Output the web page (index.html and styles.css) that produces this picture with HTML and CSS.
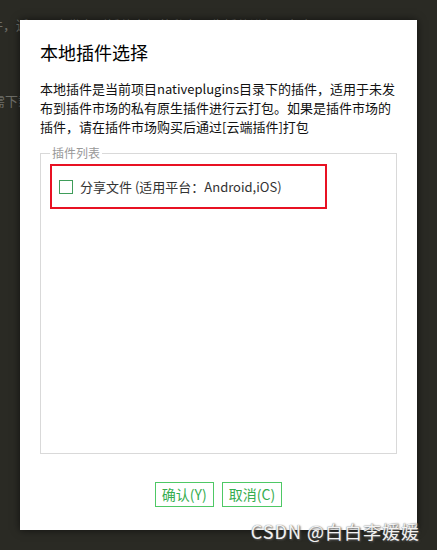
FILE: index.html
```html
<!DOCTYPE html>
<html lang="zh-CN">
<head>
  <meta charset="UTF-8" />
  <title>本地插件选择</title>
  <link rel="stylesheet" href="styles.css">
</head>
<body>
  <div class="page-behind">
    <p class="behind-line first">件，适用于未发布到插件市场的私有原生插件进行云打包。</p>
    <p class="behind-line second">需下载</p>
  </div>

  <div class="dialog">
    <h2 class="dialog-title">本地插件选择</h2>
    <p class="dialog-desc">本地插件是当前项目nativeplugins目录下的插件，适用于未发<br>布到插件市场的私有原生插件进行云打包。如果是插件市场的<br>插件，请在插件市场购买后通过[云端插件]打包</p>

    <fieldset class="plugin-list">
      <legend>插件列表</legend>
      <div class="plugin-item">
        <label class="plugin-label">
          <input type="checkbox" class="plugin-check" />
          <span>分享文件 (适用平台：Android,iOS)</span>
        </label>
      </div>
    </fieldset>

    <div class="dialog-buttons">
      <button type="button" class="dlg-button">确认(Y)</button>
      <button type="button" class="dlg-button">取消(C)</button>
    </div>
  </div>

  <div class="watermark">CSDN @白白李媛媛</div>
</body>
</html>
```

FILE: styles.css
```css
body {
  margin: 0;
  width: 437px;
  height: 550px;
  overflow: hidden;
  background: #2a2a24;
  font-family: "Noto Sans CJK SC", "Noto Sans", sans-serif;
  position: relative;
}
.page-behind {
  color: #6e6e68;
  font-size: 13px;
}
.behind-line {
  margin: 0;
  white-space: nowrap;
  line-height: 19px;
}
.behind-line.first {
  padding-top: 15px;
  margin-left: -10px;
}
.behind-line.second {
  margin-top: 57px;
  margin-left: -8px;
}
.dialog {
  position: absolute;
  left: 20px;
  top: 20px;
  width: 397px;
  height: 510px;
  box-sizing: border-box;
  background: #fff;
  box-shadow: 0 0 8px rgba(0,0,0,0.6);
  padding: 20px 20px 23px 20px;
  display: flex;
  flex-direction: column;
}
.dialog-title {
  margin: 0;
  font-size: 18px;
  font-weight: normal;
  line-height: 24px;
  color: #000;
}
.dialog-desc {
  margin: 15px 0 0 0;
  font-size: 13px;
  line-height: 19px;
  color: #111;
  white-space: nowrap;
}
.plugin-list {
  margin: 9px 0 0 0;
  padding: 0 9px;
  border: 1px solid #d9d9d9;
  flex: 1;
  min-height: 0;
}
.plugin-list legend {
  font-size: 12px;
  line-height: 16px;
  color: #999;
  padding: 0 2px;
}
.plugin-item {
  margin-top: 3px;
  width: 277px;
  height: 45px;
  box-sizing: border-box;
  border: 2px solid #e81123;
  padding-left: 7px;
  display: flex;
  align-items: center;
}
.plugin-label {
  display: flex;
  align-items: center;
  font-size: 13px;
  color: #333;
}
.plugin-check {
  appearance: none;
  margin: 0 7px 0 0;
  width: 14px;
  height: 14px;
  border: 1.5px solid #3f9d5a;
  box-sizing: border-box;
  background: #fff;
}
.dialog-buttons {
  margin-top: 28px;
  display: flex;
  justify-content: center;
  gap: 8px;
}
.dlg-button {
  height: 25px;
  padding: 0 6px;
  background: #fff;
  border: 1px solid #4ec865;
  color: #36ad4e;
  font-family: "Noto Sans CJK SC", "Noto Sans", sans-serif;
  font-size: 14px;
  line-height: 23px;
  border-radius: 0;
}
.watermark {
  position: absolute;
  right: 17px;
  bottom: 8px;
  font-family: "Noto Sans CJK SC", "Liberation Sans", sans-serif;
  font-size: 18px;
  line-height: 22px;
  letter-spacing: 1px;
  color: #f2f2f2;
  text-shadow: 1px 1px 2px #555, 0 0 1px #777;
  white-space: nowrap;
}
```
